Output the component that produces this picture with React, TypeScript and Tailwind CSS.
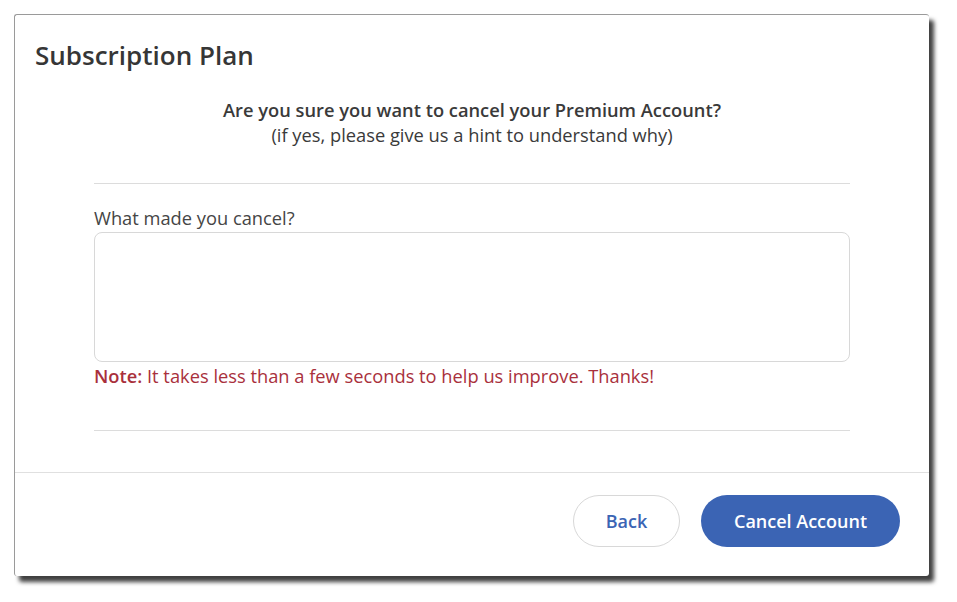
export default function App() {
  return (
    <div className="min-h-screen bg-white pl-[14px] pt-[14px]" style={{ fontFamily: '"Open Sans", "Liberation Sans", sans-serif' }}>
      <div className="flex h-[562px] w-[915px] flex-col rounded-[3px] border-l border-t border-[#9a9a9a] bg-white shadow-[5px_6px_4px_rgba(0,0,0,0.75)]">
        <h1 className="px-[20px] pt-[24px] text-[26px] font-semibold leading-8 text-[#363636]">Subscription Plan</h1>

        <div className="px-[79px] pt-[26px]">
          <div className="text-center text-[18.3px] leading-[25px] text-[#3a3a3a]">
            <p className="font-semibold">Are you sure you want to cancel your Premium Account?</p>
            <p>(if yes, please give us a hint to understand why)</p>
          </div>

          <div className="mt-[36px] border-t border-[#dcdcdc]" />

          <label className="mt-[22px] block text-[18.3px] leading-6 text-[#454545]">What made you cancel?</label>
          <textarea className="mt-[2px] block h-[130px] w-full resize-none rounded-[8px] border border-[#d8d8d8] bg-white outline-none" />
          <p className="mt-[2px] text-[18.3px] leading-6 text-[#a9303c]">
            <span className="font-semibold">Note:</span> It takes less than a few seconds to help us improve. Thanks!
          </p>

          <div className="mt-[42px] border-t border-[#dcdcdc]" />
        </div>

        <div className="mt-[41px] flex justify-end gap-[21px] border-t border-[#e0e0e0] pr-[29px] pt-[22px]">
          <button className="h-[52px] w-[107px] rounded-full border border-[#d8d8d8] bg-white text-[18px] font-semibold text-[#3b64b4]">Back</button>
          <button className="h-[52px] w-[199px] rounded-full bg-[#3b64b4] text-[18px] font-semibold text-white">Cancel Account</button>
        </div>
      </div>
    </div>
  );
}
